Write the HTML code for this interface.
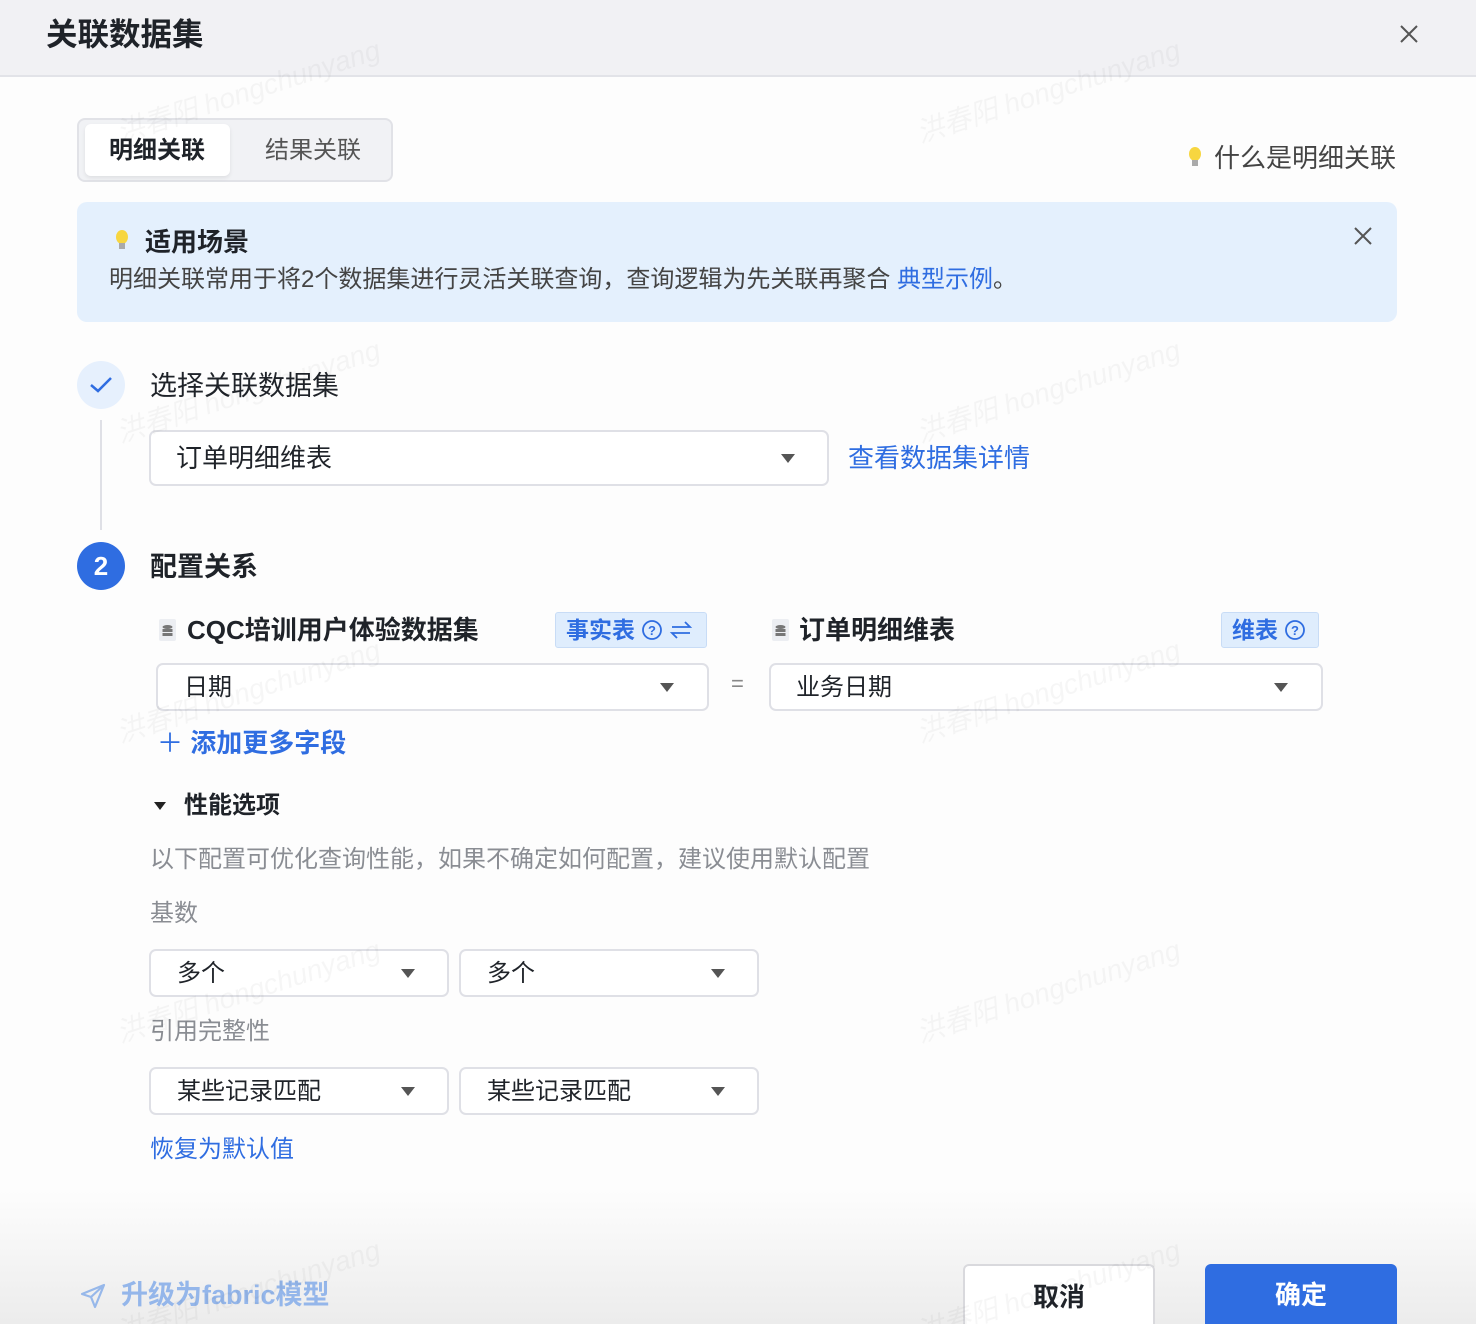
<!DOCTYPE html>
<html><head><meta charset="utf-8"><style>
*{box-sizing:border-box;margin:0;padding:0}
html,body{width:1476px;height:1324px;overflow:hidden}
body{background:#fdfdfd;font-family:"Liberation Sans","Noto Sans CJK SC",sans-serif;color:#1f2329;position:relative}
.a{position:absolute;white-space:nowrap}
.hdr{left:0;top:0;width:1476px;height:77px;background:#f1f1f4;border-bottom:2px solid #e2e3e8}
.sel{position:absolute;border:2px solid #dfe0e6;border-radius:7px;background:#fff}
.arr{position:absolute;width:0;height:0;border-left:7px solid transparent;border-right:7px solid transparent;border-top:9px solid #555;top:50%;margin-top:-4px}
.blue{color:#2f6de1}
.wm{position:absolute;color:rgba(0,0,0,0.035);font-size:28px;transform:rotate(-18deg);white-space:nowrap;font-style:italic}
.tag{position:absolute;background:#dfedfd;border:1px solid #c8dcf6;border-radius:3px;color:#2f6de1;font-size:23px;font-weight:bold;line-height:34px;padding-left:10px}
.q{display:inline-block;vertical-align:middle;margin-left:6px;margin-top:-4px}
</style></head><body>
<div class="a hdr"></div>
<div class="a" style="left:46px;top:14px;font-size:31.5px;font-weight:bold;line-height:40px">关联数据集</div>
<svg class="a" style="left:1399px;top:24px" width="20" height="20"><path d="M2 2L18 18M18 2L2 18" stroke="#555" stroke-width="2"/></svg>

<div class="a" style="left:77px;top:118px;width:316px;height:64px;background:#f1f2f5;border:2px solid #e1e2e7;border-radius:8px"></div>
<div class="a" style="left:85px;top:124px;width:145px;height:52px;background:#fff;border-radius:6px;box-shadow:0 2px 4px rgba(0,0,0,0.08)"></div>
<div class="a" style="left:109px;top:136px;font-size:24px;font-weight:bold;line-height:30px">明细关联</div>
<div class="a" style="left:265px;top:136px;font-size:24px;color:#555;line-height:30px">结果关联</div>

<svg class="a" style="left:1187px;top:146px" width="16" height="24"><ellipse cx="8" cy="8" rx="6" ry="7" fill="#f7d640"/><rect x="5" y="14" width="6" height="6" fill="#aaa"/></svg>
<div class="a" style="left:1214px;top:142px;font-size:26px;color:#444;line-height:32px">什么是明细关联</div>

<div class="a" style="left:77px;top:202px;width:1320px;height:120px;background:#e4f0fd;border-radius:10px"></div>
<svg class="a" style="left:114px;top:229px" width="16" height="24"><ellipse cx="8" cy="8" rx="6" ry="7" fill="#f7d640"/><rect x="5" y="14" width="6" height="6" fill="#aaa"/></svg>
<div class="a" style="left:145px;top:226px;font-size:26px;font-weight:bold;line-height:32px">适用场景</div>
<div class="a" style="left:109px;top:265px;font-size:24px;color:#444;line-height:30px">明细关联常用于将2个数据集进行灵活关联查询，查询逻辑为先关联再聚合 <span class="blue">典型示例</span>。</div>
<svg class="a" style="left:1353px;top:226px" width="20" height="20"><path d="M2 2L18 18M18 2L2 18" stroke="#555" stroke-width="2"/></svg>

<div class="a" style="left:77px;top:361px;width:48px;height:48px;border-radius:50%;background:#e6f0fd"></div>
<svg class="a" style="left:89px;top:375px" width="24" height="20"><path d="M2 10L9 16L22 3" stroke="#2f6de1" stroke-width="2.5" fill="none"/></svg>
<div class="a" style="left:150px;top:369px;font-size:27px;line-height:34px">选择关联数据集</div>
<div class="a" style="left:100px;top:420px;width:2px;height:110px;background:#dfe0e6"></div>
<div class="sel" style="left:149px;top:430px;width:680px;height:56px"><div class="a" style="left:25px;top:10px;font-size:26px;line-height:32px">订单明细维表</div><div class="arr" style="left:630px"></div></div>
<div class="a blue" style="left:848px;top:441px;font-size:26px;line-height:34px">查看数据集详情</div>

<div class="a" style="left:77px;top:542px;width:48px;height:48px;border-radius:50%;background:#2f6de1;color:#fff;font-size:26px;font-weight:bold;text-align:center;line-height:48px">2</div>
<div class="a" style="left:150px;top:550px;font-size:27px;font-weight:bold;line-height:34px">配置关系</div>

<svg class="a" style="left:159px;top:619px" width="17" height="22"><rect width="17" height="22" rx="2" fill="#eceef2"/><ellipse cx="8.5" cy="8" rx="5" ry="2" fill="#777"/><rect x="3.5" y="10" width="10" height="3" fill="#777"/><rect x="3.5" y="14" width="10" height="3" fill="#777"/></svg>
<div class="a" style="left:187px;top:614px;font-size:26px;font-weight:bold;line-height:32px">CQC培训用户体验数据集</div>
<div class="tag" style="left:555px;top:612px;width:152px;height:36px">事实表<svg class="q" width="22" height="22"><circle cx="11" cy="11" r="9" stroke="#2f6de1" stroke-width="1.8" fill="none"/><text x="11" y="16" font-size="13" text-anchor="middle" fill="#2f6de1" font-family="Liberation Sans">?</text></svg><svg class="q" width="24" height="22"><path d="M3 8H21L16 3M21 14H3L8 19" stroke="#2f6de1" stroke-width="1.8" fill="none"/></svg></div>
<svg class="a" style="left:772px;top:619px" width="17" height="22"><rect width="17" height="22" rx="2" fill="#eceef2"/><ellipse cx="8.5" cy="8" rx="5" ry="2" fill="#777"/><rect x="3.5" y="10" width="10" height="3" fill="#777"/><rect x="3.5" y="14" width="10" height="3" fill="#777"/></svg>
<div class="a" style="left:799px;top:614px;font-size:26px;font-weight:bold;line-height:32px">订单明细维表</div>
<div class="tag" style="left:1221px;top:612px;width:98px;height:36px">维表<svg class="q" width="22" height="22"><circle cx="11" cy="11" r="9" stroke="#2f6de1" stroke-width="1.8" fill="none"/><text x="11" y="16" font-size="13" text-anchor="middle" fill="#2f6de1" font-family="Liberation Sans">?</text></svg></div>

<div class="sel" style="left:156px;top:663px;width:553px;height:48px"><div class="a" style="left:26px;top:8px;font-size:24px;line-height:30px">日期</div><div class="arr" style="left:502px"></div></div>
<div class="a" style="left:731px;top:671px;font-size:22px;color:#888">=</div>
<div class="sel" style="left:769px;top:663px;width:554px;height:48px"><div class="a" style="left:25px;top:8px;font-size:24px;line-height:30px">业务日期</div><div class="arr" style="left:503px"></div></div>
<div class="a blue" style="left:157px;top:727px;font-size:26px;font-weight:bold;line-height:32px"><span style="font-weight:normal">＋</span> 添加更多字段</div>

<div class="arr" style="left:154px;top:806px;border-left-width:6px;border-right-width:6px;border-top-width:8px;border-top-color:#222"></div>
<div class="a" style="left:184px;top:791px;font-size:24px;font-weight:bold;line-height:30px">性能选项</div>
<div class="a" style="left:150px;top:845px;font-size:24px;color:#8a8d93;line-height:30px">以下配置可优化查询性能，如果不确定如何配置，建议使用默认配置</div>
<div class="a" style="left:150px;top:899px;font-size:24px;color:#8a8d93;line-height:30px">基数</div>
<div class="sel" style="left:149px;top:949px;width:300px;height:48px"><div class="a" style="left:26px;top:8px;font-size:24px;line-height:30px">多个</div><div class="arr" style="left:250px"></div></div>
<div class="sel" style="left:459px;top:949px;width:300px;height:48px"><div class="a" style="left:26px;top:8px;font-size:24px;line-height:30px">多个</div><div class="arr" style="left:250px"></div></div>
<div class="a" style="left:150px;top:1017px;font-size:24px;color:#8a8d93;line-height:30px">引用完整性</div>
<div class="sel" style="left:149px;top:1067px;width:300px;height:48px"><div class="a" style="left:26px;top:8px;font-size:24px;line-height:30px">某些记录匹配</div><div class="arr" style="left:250px"></div></div>
<div class="sel" style="left:459px;top:1067px;width:300px;height:48px"><div class="a" style="left:26px;top:8px;font-size:24px;line-height:30px">某些记录匹配</div><div class="arr" style="left:250px"></div></div>
<div class="a blue" style="left:150px;top:1135px;font-size:24px;line-height:30px">恢复为默认值</div>

<div class="a" style="left:0;top:1190px;width:1476px;height:134px;background:linear-gradient(#fdfdfd,#ececec)"></div>
<svg class="a" style="left:79px;top:1282px" width="28" height="28"><path d="M3 12L25 3L16 25L12 15Z M12 15L25 3" stroke="#97b8ea" stroke-width="2.2" fill="none" stroke-linejoin="round"/></svg>
<div class="a" style="left:121px;top:1278px;font-size:27px;font-weight:bold;color:#94b6ea;line-height:34px">升级为fabric模型</div>
<div class="a" style="left:963px;top:1264px;width:192px;height:60px;background:#fff;border:2px solid #d9d9dd;border-bottom:none;border-radius:6px 6px 0 0;text-align:center;font-size:26px;font-weight:bold;line-height:62px">取消</div>
<div class="a" style="left:1205px;top:1264px;width:192px;height:60px;background:#2f6de1;border-radius:6px 6px 0 0;text-align:center;font-size:26px;font-weight:bold;line-height:62px;color:#fff">确定</div>

<div class="wm" style="left:110px;top:70px">洪春阳 hongchunyang</div>
<div class="wm" style="left:910px;top:70px">洪春阳 hongchunyang</div>
<div class="wm" style="left:110px;top:370px">洪春阳 hongchunyang</div>
<div class="wm" style="left:910px;top:370px">洪春阳 hongchunyang</div>
<div class="wm" style="left:110px;top:670px">洪春阳 hongchunyang</div>
<div class="wm" style="left:910px;top:670px">洪春阳 hongchunyang</div>
<div class="wm" style="left:110px;top:970px">洪春阳 hongchunyang</div>
<div class="wm" style="left:910px;top:970px">洪春阳 hongchunyang</div>
<div class="wm" style="left:110px;top:1270px">洪春阳 hongchunyang</div>
<div class="wm" style="left:910px;top:1270px">洪春阳 hongchunyang</div>
</body></html>
